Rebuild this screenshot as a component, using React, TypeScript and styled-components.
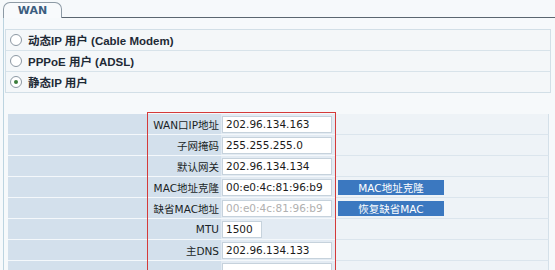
import React from "react";
import styled, { createGlobalStyle } from "styled-components";

const GlobalStyle = createGlobalStyle`
  html, body {
    margin: 0;
    padding: 0;
    background: #f6f9fb;
    font-family: "DejaVu Sans", "Noto Sans CJK SC", sans-serif;
    overflow: hidden;
  }
`;

const SPage = styled.div`
  width: 555px;
  height: 270px;
  padding: 2px 0 0 3px;
  box-sizing: border-box;
  position: relative;
  overflow: hidden;
`;

const STabBar = styled.div`
  display: flex;
  align-items: flex-end;
  height: 16px;
`;

const STab = styled.div`
  width: 57px;
  height: 15px;
  border: 1px solid #8d9aa5;
  border-bottom: none;
  border-radius: 7px 7px 0 0;
  background: #f8fafc;
  display: flex;
  align-items: center;
  justify-content: center;
  font-size: 11px;
  font-weight: bold;
  color: #3d5e80;
`;

const STabLine = styled.div`
  flex: 1;
  border-bottom: 1px solid #5b6670;
`;

const SPanel = styled.div`
  border-left: 1px solid #bcd4e0;
  padding: 11px 4px 0 1px;
  height: 260px;
  box-sizing: border-box;
`;

const SRadioBox = styled.div`
  border: 1px solid #d2dfe7;
  background: #f4f7f9;
  display: flex;
  flex-direction: column;
`;

const SRadioRow = styled.label`
  height: 20px;
  display: flex;
  align-items: center;
  gap: 6px;
  padding-left: 4px;
  font-family: "Liberation Sans", "Noto Sans CJK SC", sans-serif;
  font-size: 11.5px;
  font-weight: bold;
  color: #1e2a36;
  & + & {
    border-top: 1px solid #d8e3ea;
  }
`;

const SRadio = styled.span<{ $checked?: boolean }>`
  width: 10px;
  height: 10px;
  border-radius: 50%;
  border: 1px solid #8c98a3;
  background: #ffffff;
  display: grid;
  place-items: center;
  &::after {
    content: "";
    width: 4px;
    height: 4px;
    border-radius: 50%;
    background: ${(p) => (p.$checked ? "#3a7d3a" : "transparent")};
  }
`;

const STable = styled.div`
  margin: 21px 2px 0 3px;
  display: grid;
  grid-template-columns: 213px 114px 1fr;
`;

const SLabel = styled.div`
  height: 20px;
  border-bottom: 1px solid #f4f8fb;
  background: #d3e0ec;
  display: flex;
  align-items: center;
  justify-content: flex-end;
  padding-right: 2px;
  font-size: 10.5px;
  color: #1a1f26;
`;

const SValueCell = styled.div`
  height: 20px;
  border-bottom: 1px solid #f4f8fb;
  background: #e3ebf3;
  display: flex;
  align-items: center;
`;

const SExtraCell = styled.div`
  height: 20px;
  border-bottom: 1px solid #dbe5ed;
  border-right: 1px solid #d4e0e9;
  background: #eef3f7;
  display: flex;
  align-items: center;
  padding-left: 3px;
`;

const SInput = styled.input<{ $width?: number }>`
  width: ${(p) => p.$width ?? 110}px;
  height: 17px;
  box-sizing: border-box;
  margin-left: 1px;
  border: 1px solid #c6d2dc;
  background: #ffffff;
  padding: 0 3px;
  font-family: "DejaVu Sans", sans-serif;
  font-size: 10.5px;
  color: #1a1a1a;
  outline: none;
  &:disabled {
    color: #b0b0b0;
    background: #ffffff;
  }
`;

const SButton = styled.button`
  width: 106px;
  height: 15px;
  border: none;
  background: #3b78c0;
  color: #ffffff;
  font-family: "DejaVu Sans", "Noto Sans CJK SC", sans-serif;
  font-size: 10.5px;
  padding: 0;
  display: flex;
  align-items: center;
  justify-content: center;
`;

const SHighlight = styled.div`
  position: absolute;
  left: 147px;
  top: 112px;
  width: 187px;
  height: 170px;
  border: 1px solid #d43a3a;
  pointer-events: none;
`;

type Row = {
  label: string;
  value: string;
  width?: number;
  disabled?: boolean;
  button?: string;
};

const rows: Row[] = [
  { label: "WAN口IP地址", value: "202.96.134.163" },
  { label: "子网掩码", value: "255.255.255.0" },
  { label: "默认网关", value: "202.96.134.134" },
  { label: "MAC地址克隆", value: "00:e0:4c:81:96:b9", button: "MAC地址克隆" },
  { label: "缺省MAC地址", value: "00:e0:4c:81:96:b9", disabled: true, button: "恢复缺省MAC" },
  { label: "MTU", value: "1500", width: 40 },
  { label: "主DNS", value: "202.96.134.133" },
  { label: "", value: "" },
];

const App = () => {
  return (
    <>
      <GlobalStyle />
      <SPage>
        <STabBar>
          <STab>WAN</STab>
          <STabLine />
        </STabBar>
        <SPanel>
          <SRadioBox>
            <SRadioRow>
              <SRadio />
              动态IP 用户 (Cable Modem)
            </SRadioRow>
            <SRadioRow>
              <SRadio />
              PPPoE 用户 (ADSL)
            </SRadioRow>
            <SRadioRow>
              <SRadio $checked />
              静态IP 用户
            </SRadioRow>
          </SRadioBox>
          <STable>
            {rows.map((r, i) => (
              <React.Fragment key={i}>
                <SLabel>{r.label}</SLabel>
                <SValueCell>
                  <SInput
                    $width={r.width}
                    defaultValue={r.value}
                    disabled={r.disabled}
                  />
                </SValueCell>
                <SExtraCell>{r.button && <SButton>{r.button}</SButton>}</SExtraCell>
              </React.Fragment>
            ))}
          </STable>
        </SPanel>
        <SHighlight />
      </SPage>
    </>
  );
};

export default App;
